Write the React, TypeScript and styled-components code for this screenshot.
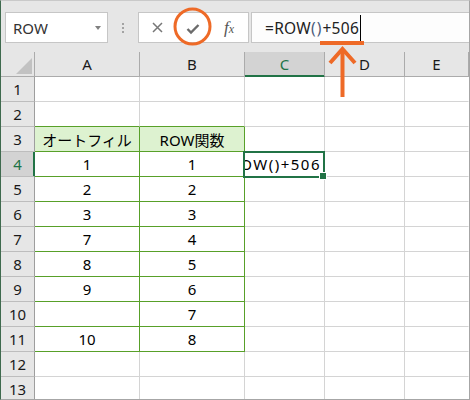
import React from "react";
import styled, { createGlobalStyle } from "styled-components";

const GlobalStyle = createGlobalStyle`
  html, body { margin: 0; padding: 0; background: #fff; }
  body { font-family: "Noto Sans", "Noto Sans CJK JP", sans-serif; }
  * { box-sizing: border-box; }
`;

const GREEN = "#58a029";
const GRID = "#d4d4d4";
const XL = "#217346";
const ORANGE = "#ee6a27";

const Window = styled.div`
  position: relative;
  width: 470px;
  height: 400px;
  overflow: hidden;
  background: #e6e6e6;
  border-top: 1px solid #c9c9c9;
  border-left: 1px solid #3f6a4e;
  border-right: 1px solid #a6a6a6;
  border-bottom: 1px solid #a6a6a6;
  font-family: "Noto Sans", "Noto Sans CJK JP", sans-serif;
`;

const Toolbar = styled.div`
  display: flex;
  align-items: flex-start;
  height: 51px;
  padding: 11px 0 0 4px;
`;

const NameBox = styled.div`
  width: 103px;
  height: 31px;
  background: #fff;
  border: 1px solid #c6c6c6;
  display: flex;
  align-items: center;
  justify-content: space-between;
  padding: 0 6px 0 7px;
  font-size: 15px;
  color: #333;
`;

const DropArrow = styled.span`
  width: 0;
  height: 0;
  border-left: 3.5px solid transparent;
  border-right: 3.5px solid transparent;
  border-top: 4px solid #808080;
`;

const Grip = styled.div`
  width: 30px;
  height: 31px;
  display: flex;
  flex-direction: column;
  align-items: center;
  justify-content: center;
  gap: 2px;
`;

const GripDot = styled.span`
  width: 2px;
  height: 2px;
  background: #a3a3a3;
`;

const ButtonBox = styled.div`
  width: 111px;
  height: 31px;
  background: #fff;
  border: 1px solid #c6c6c6;
  display: grid;
  grid-template-columns: 36px 35px 38px;
  align-items: center;
  justify-items: center;
`;

const Fx = styled.span`
  font-family: "Liberation Serif", serif;
  font-style: italic;
  font-size: 17px;
  color: #555;
  line-height: 1;
  & > small {
    font-size: 12px;
  }
`;

const FormulaBox = styled.div`
  flex: 1;
  height: 31px;
  margin-left: 2px;
  background: #fdfdfd;
  border: 1px solid #c6c6c6;
  border-right: none;
  display: flex;
  align-items: center;
  padding-left: 13px;
  font-size: 15.5px;
  letter-spacing: 0.3px;
  color: #222;
`;

const Paren = styled.span`
  color: #4a5a7a;
  letter-spacing: 1px;
`;

const Caret = styled.span`
  display: inline-block;
  width: 1px;
  height: 26px;
  background: #000;
  margin-left: 1px;
`;

const Sheet = styled.div`
  display: grid;
  grid-template-columns: 34px 105px 105px 80px 80px 1fr;
  grid-auto-rows: 25px;
  font-size: 15px;
`;

const Corner = styled.div`
  position: relative;
  background: #e6e6e6;
  border-right: 1px solid #ababab;
  border-bottom: 1px solid #ababab;
  &::after {
    content: "";
    position: absolute;
    right: 2px;
    bottom: 2px;
    width: 0;
    height: 0;
    border-left: 16px solid transparent;
    border-bottom: 16px solid #c2c2c2;
  }
`;

const ColHead = styled.div<{ $sel?: boolean }>`
  display: flex;
  align-items: center;
  justify-content: center;
  background: ${(p) => (p.$sel ? "#d3d3d3" : "#e6e6e6")};
  color: ${(p) => (p.$sel ? XL : "#1a1a1a")};
  border-right: 1px solid #ababab;
  border-bottom: 1px solid ${(p) => (p.$sel ? XL : "#ababab")};
  box-shadow: ${(p) => (p.$sel ? `inset 0 -1px 0 ${XL}` : "none")};
`;

const RowHead = styled.div<{ $sel?: boolean }>`
  display: flex;
  align-items: center;
  justify-content: center;
  background: ${(p) => (p.$sel ? "#d3d3d3" : "#e6e6e6")};
  color: ${(p) => (p.$sel ? XL : "#1a1a1a")};
  border-right: 1px solid ${(p) => (p.$sel ? XL : "#9e9e9e")};
  border-bottom: 1px solid #bdbdbd;
  box-shadow: ${(p) => (p.$sel ? `inset -1px 0 0 ${XL}` : "none")};
`;

const Cell = styled.div<{ $right: string; $bottom: string; $fill?: string }>`
  display: flex;
  align-items: center;
  justify-content: center;
  background: ${(p) => p.$fill || "#fff"};
  border-right: 1px solid ${(p) => p.$right};
  border-bottom: 1px solid ${(p) => p.$bottom};
  color: #000;
  white-space: nowrap;
  overflow: hidden;
`;

const ActiveCell = styled.div`
  position: relative;
  z-index: 2;
  display: flex;
  background: #fff;
  border-right: 1px solid ${GRID};
  border-bottom: 1px solid ${GRID};
  &::after {
    content: "";
    position: absolute;
    left: -2px;
    top: -1px;
    right: -1px;
    bottom: -2px;
    border: 2px solid ${XL};
  }
  &::before {
    content: "";
    position: absolute;
    right: -3px;
    bottom: -4px;
    width: 6px;
    height: 6px;
    background: ${XL};
    border: 1px solid #fff;
    z-index: 1;
  }
`;

const ActiveText = styled.div`
  flex: 1;
  overflow: hidden;
  display: flex;
  align-items: center;
  justify-content: flex-end;
  padding-right: 3px;
  white-space: nowrap;
  letter-spacing: 1.5px;
  color: #000;
`;

const Overlay = styled.svg`
  position: absolute;
  left: -1px;
  top: -1px;
  pointer-events: none;
  z-index: 5;
`;

const data: [string, string][] = [
  ["", ""],
  ["", ""],
  ["オートフィル", "ROW関数"],
  ["1", "1"],
  ["2", "2"],
  ["3", "3"],
  ["7", "4"],
  ["8", "5"],
  ["9", "6"],
  ["", "7"],
  ["10", "8"],
  ["", ""],
  ["", ""],
];

export default function App() {
  const cols = ["A", "B", "C", "D", "E"];
  return (
    <>
      <GlobalStyle />
      <Window>
        <Toolbar>
          <NameBox>
            <span>ROW</span>
            <DropArrow />
          </NameBox>
          <Grip>
            <GripDot />
            <GripDot />
            <GripDot />
          </Grip>
          <ButtonBox>
            <svg width="11" height="11" viewBox="0 0 11 11">
              <path d="M1 1 L10 10 M10 1 L1 10" stroke="#777" strokeWidth="1.5" fill="none" />
            </svg>
            <svg width="14" height="12" viewBox="0 0 14 12" style={{ marginTop: 3 }}>
              <path d="M1.5 6 L5 9.5 L12.5 2" stroke="#6b6b6b" strokeWidth="2.4" fill="none" />
            </svg>
            <Fx>
              f<small>x</small>
            </Fx>
          </ButtonBox>
          <FormulaBox>
            <span>
              =ROW<Paren>()</Paren>+506
            </span>
            <Caret />
          </FormulaBox>
        </Toolbar>
        <Sheet>
          <Corner />
          {cols.map((c) => (
            <ColHead key={c} $sel={c === "C"}>
              {c}
            </ColHead>
          ))}
          {data.map(([a, b], i) => {
            const r = i + 1;
            const inTable = r >= 3 && r <= 11;
            const bottomAB = r >= 2 && r <= 11 ? GREEN : GRID;
            const fill = r === 3 ? "#ddf2d0" : undefined;
            return (
              <React.Fragment key={r}>
                <RowHead $sel={r === 4}>{r}</RowHead>
                <Cell $right={inTable ? GREEN : GRID} $bottom={bottomAB} $fill={fill}>
                  {a}
                </Cell>
                <Cell $right={inTable ? GREEN : GRID} $bottom={bottomAB} $fill={fill}>
                  {b}
                </Cell>
                {r === 4 ? (
                  <ActiveCell>
                    <ActiveText>=ROW()+506</ActiveText>
                  </ActiveCell>
                ) : (
                  <Cell $right={GRID} $bottom={GRID} />
                )}
                <Cell $right={GRID} $bottom={GRID} />
                <Cell $right="transparent" $bottom={GRID} />
              </React.Fragment>
            );
          })}
        </Sheet>
        <Overlay width="470" height="400" viewBox="0 0 470 400">
          <circle cx="192.5" cy="26.5" r="17.5" stroke={ORANGE} strokeWidth="3" fill="none" />
          <rect x="320" y="41" width="44" height="4" fill={ORANGE} />
          <line x1="342.5" y1="50" x2="342.5" y2="97" stroke={ORANGE} strokeWidth="4" />
          <polyline
            points="330,63 342.5,49 355,63"
            stroke={ORANGE}
            strokeWidth="4"
            fill="none"
            strokeLinejoin="miter"
          />
        </Overlay>
      </Window>
    </>
  );
}
